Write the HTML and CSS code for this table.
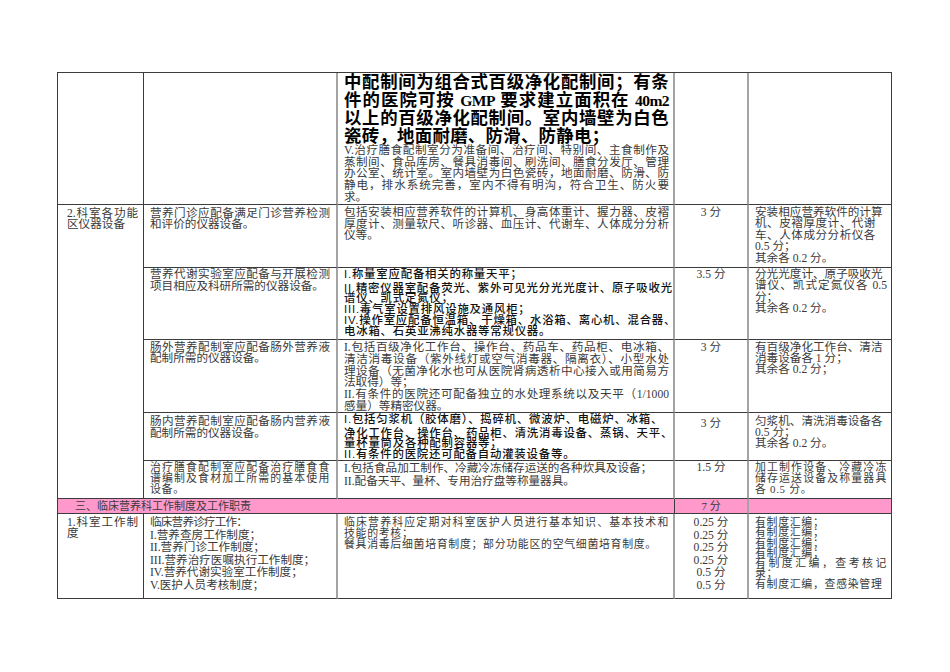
FILE: index.html
```html
<!DOCTYPE html>
<html lang="zh-CN">
<head>
<meta charset="utf-8">
<title>临床营养科</title>
<link rel="stylesheet" href="styles.css">
</head>
<body>
<div class="sheet">
  <!-- row 1 -->
  <div class="c c1"></div>
  <div class="c c2"></div>
  <div class="c c3 top">
    <div class="big">
      <div class="j">中配制间为组合式百级净化配制间；有条</div>
      <div class="j">件的医院可按 <span class="lat">GMP</span> 要求建立面积在 <span class="lat">40m2</span></div>
      <div class="j">以上的百级净化配制间。室内墙壁为白色</div>
      <div class="n">瓷砖，地面耐磨、防滑、防静电；</div>
    </div>
    <div class="lh117">
      <div class="j">V.治疗膳食配制室分为准备间、治疗间、特别间、主食制作及</div>
      <div class="j">蒸制间、食品库房、餐具消毒间、刷洗间、膳食分发厅、管理</div>
      <div class="j">办公室、统计室。室内墙壁为白色瓷砖，地面耐磨、防滑、防</div>
      <div class="j">静电，排水系统完善，室内不得有明沟，符合卫生、防火要</div>
      <div class="n">求。</div>
    </div>
  </div>
  <div class="c c4"></div>
  <div class="c c5"></div>

  <!-- row 2a -->
  <div class="c c1 span5 p25">
    <div class="j">2.科室各功能</div>
    <div class="n">区仪器设备</div>
  </div>
  <div class="c c2 p25">
    <div class="j">营养门诊应配备满足门诊营养检测</div>
    <div class="n">和评价的仪器设备。</div>
  </div>
  <div class="c c3">
    <div class="j">包括安装相应营养软件的计算机、身高体重计、握力器、皮褶</div>
    <div class="j">厚度计、测量软尺、听诊器、血压计、代谢车、人体成分分析</div>
    <div class="n">仪等。</div>
  </div>
  <div class="c c4">3 分</div>
  <div class="c c5 lh114">
    <div class="n">安装相应营养软件的计算</div>
    <div class="n sp">机、皮褶厚度计、代谢</div>
    <div class="n sp">车、人体成分分析仪各</div>
    <div class="n">0.5 分；</div>
    <div class="n">其余各 0.2 分。</div>
  </div>

  <!-- row 2b -->
  <div class="c c2 p1">
    <div class="j">营养代谢实验室应配备与开展检测</div>
    <div class="n">项目相应及科研所需的仪器设备。</div>
  </div>
  <div class="c c3 hei">
    <div class="first">I.称量室应配备相关的称量天平；</div>
    <div class="n">II.精密仪器室配备荧光、紫外可见光分光光度计、原子吸收光</div>
    <div class="n">谱仪、凯式定氮仪；</div>
    <div class="n">III.毒气室设置排风设施及通风柜；</div>
    <div class="n">IV.操作室应配备恒温箱、干燥箱、水浴箱、离心机、混合器、</div>
    <div class="n">电冰箱、石英亚沸纯水器等常规仪器。</div>
  </div>
  <div class="c c4 p1">3.5 分</div>
  <div class="c c5 p1 lh114">
    <div class="n">分光光度计、原子吸收光</div>
    <div class="j">谱仪、凯式定氮仪各 0.5</div>
    <div class="n">分；</div>
    <div class="n">其余各 0.2 分。</div>
  </div>

  <!-- row 2c -->
  <div class="c c2 lh113">
    <div class="j">肠外营养配制室应配备肠外营养液</div>
    <div class="n">配制所需的仪器设备。</div>
  </div>
  <div class="c c3 lh118">
    <div class="j">I.包括百级净化工作台、操作台、药品车、药品柜、电冰箱、</div>
    <div class="j">清洁消毒设备（紫外线灯或空气消毒器、隔离衣）、小型水处</div>
    <div class="j">理设备（无菌净化水也可从医院肾病透析中心接入或用简易方</div>
    <div class="n">法取得）等；</div>
    <div class="j">II.有条件的医院还可配备独立的水处理系统以及天平（1/1000</div>
    <div class="n">感量）等精密仪器。</div>
  </div>
  <div class="c c4">3 分</div>
  <div class="c c5 lh112">
    <div class="n">有百级净化工作台、清洁</div>
    <div class="n">消毒设备各 1 分；</div>
    <div class="n">其余各 0.2 分；</div>
  </div>

  <!-- row 2d -->
  <div class="c c2 p3">
    <div class="j">肠内营养配制室应配备肠内营养液</div>
    <div class="n">配制所需的仪器设备。</div>
  </div>
  <div class="c c3 hei hei2">
    <div class="first">I.包括匀浆机（胶体磨）、捣碎机、微波炉、电磁炉、冰箱、</div>
    <div class="n">净化工作台、操作台、药品柜、清洗消毒设备、蒸锅、天平、</div>
    <div class="n">量杯量筒及各种配制容器等；</div>
    <div class="n">II.有条件的医院还可配备自动灌装设备等。</div>
  </div>
  <div class="c c4 p45">3 分</div>
  <div class="c c5 p25 lh112">
    <div class="n">匀浆机、清洗消毒设备各</div>
    <div class="n">0.5 分；</div>
    <div class="n">其余各 0.2 分。</div>
  </div>

  <!-- row 2e -->
  <div class="c c2 p1 lh108 sm">
    <div class="j">治疗膳食配制室应配备治疗膳食食</div>
    <div class="j">谱编制及食材加工所需的基本使用</div>
    <div class="n">设备。</div>
  </div>
  <div class="c c3 p1 lh133">
    <div class="n">I.包括食品加工制作、冷藏冷冻储存运送的各种炊具及设备；</div>
    <div class="n">II.配备天平、量杯、专用治疗盘等称量器具。</div>
  </div>
  <div class="c c4 p1">1.5 分</div>
  <div class="c c5 p1 lh108 sm">
    <div class="j">加工制作设备、冷藏冷冻</div>
    <div class="j">储存运送设备及称量器具</div>
    <div class="n">各 0.5 分。</div>
  </div>

  <!-- section header -->
  <div class="c pink head">三、临床营养科工作制度及工作职责</div>
  <div class="c c4 pinkc head">7 分</div>
  <div class="c c5 pinkc"></div>

  <!-- row 3 -->
  <div class="c c1 p25 lh114">
    <div class="j">1.科室工作制</div>
    <div class="n">度</div>
  </div>
  <div class="c c2 p3 lh126">
    <div class="n cond">临床营养诊疗工作：</div>
    <div class="n">I.营养查房工作制度；</div>
    <div class="n">II.营养门诊工作制度；</div>
    <div class="n">III.营养治疗医嘱执行工作制度；</div>
    <div class="n">IV.营养代谢实验室工作制度；</div>
    <div class="n">V.医护人员考核制度；</div>
  </div>
  <div class="c c3 p3 lh108 sm">
    <div class="j">临床营养科应定期对科室医护人员进行基本知识、基本技术和</div>
    <div class="n">技能的考核；</div>
    <div class="n">餐具消毒后细菌培育制度；部分功能区的空气细菌培育制度。</div>
  </div>
  <div class="c c4 p3 lh126">
    <div>0.25 分</div>
    <div>0.25 分</div>
    <div>0.25 分</div>
    <div>0.25 分</div>
    <div>0.5 分</div>
    <div>0.5 分</div>
  </div>
  <div class="c c5 p3 lh103 sm">
    <div class="n">有制度汇编；</div>
    <div class="n">有制度汇编；</div>
    <div class="n">有制度汇编；</div>
    <div class="n">有制度汇编；</div>
    <div class="j">有制度汇编，查考核记</div>
    <div class="n">录；</div>
    <div class="n">有制度汇编，查感染管理</div>
  </div>
</div>
</body>
</html>
```
FILE: styles.css
```css
* {
  box-sizing: border-box;
  margin: 0;
  padding: 0;
}

html, body {
  background: #ffffff;
}

body {
  padding: 72px 0 0 57px;
  font-family: "Liberation Serif", "Noto Sans CJK SC", serif;
  font-size: 11.6px;
  color: #3a3a3a;
}

.sheet {
  display: grid;
  width: 835px;
  grid-template-columns: 86px 194px 337px 74px 143px;
  grid-template-rows: 132px 63px 72px 73px 48px 38px 15px 85px;
  border-top: 1px solid #3c3c3c;
  border-left: 1px solid #3c3c3c;
}

.c {
  overflow: hidden;
  border-right: 1px solid #3c3c3c;
  border-bottom: 1px solid #3c3c3c;
  padding-top: 2px;
  line-height: 11.6px;
}

.c1 { padding-left: 9px; padding-right: 5px; }
.c2 { padding-left: 6px; padding-right: 6px; border-right: 2px solid #a4a4a4; }
.c3 { padding-left: 6px; padding-right: 4px; border-right: 2px solid #a4a4a4; }
.c4 { text-align: center; border-right: 2px solid #a4a4a4; }
.c5 { padding-left: 6px; padding-right: 4px; }

.span5 { grid-row: span 5; }

.top { padding-top: 0; }

.j {
  text-align: justify;
  text-align-last: justify;
}

.n { white-space: nowrap; }

.sp { letter-spacing: 0.5px; }
.cond { letter-spacing: -0.8px; }

.sm {
  font-size: 10.9px;
  letter-spacing: 0.7px;
}

.big {
  font-weight: bold;
  font-size: 17.4px;
  letter-spacing: 0.3px;
  line-height: 18px;
  color: #000000;
}

.big > div {
  height: 18px;
}

.lat {
  font-size: 15.6px;
  letter-spacing: -0.6px;
  line-height: 0;
}

.hei {
  padding-top: 1px;
  font-family: "Liberation Sans", "Noto Sans CJK SC", sans-serif;
  font-size: 11.4px;
  letter-spacing: 0.8px;
  font-weight: 500;
  color: #111111;
  line-height: 10.8px;
}

.hei2 { line-height: 10.6px; }

.hei .first {
  line-height: 11px;
  margin-bottom: 2.5px;
  white-space: nowrap;
}

.pink { grid-column: span 3; background: #ff99cc; }
.pinkc { background: #ff99cc; }

.head {
  padding-top: 0;
  line-height: 14px;
  font-size: 11px;
}

.pink.head { padding-left: 17px; }

.p1 { padding-top: 1px; }
.p25 { padding-top: 2.5px; }
.p3 { padding-top: 3px; }
.p45 { padding-top: 4.5px; }

.lh103 { line-height: 10.3px; }
.lh108 { line-height: 10.8px; }
.lh112 { line-height: 11.2px; }
.lh113 { line-height: 11.3px; }
.lh114 { line-height: 11.4px; }
.lh117 { line-height: 11.7px; }
.lh118 { line-height: 11.8px; }
.lh126 { line-height: 12.6px; }
.lh133 { line-height: 13.3px; }
```
